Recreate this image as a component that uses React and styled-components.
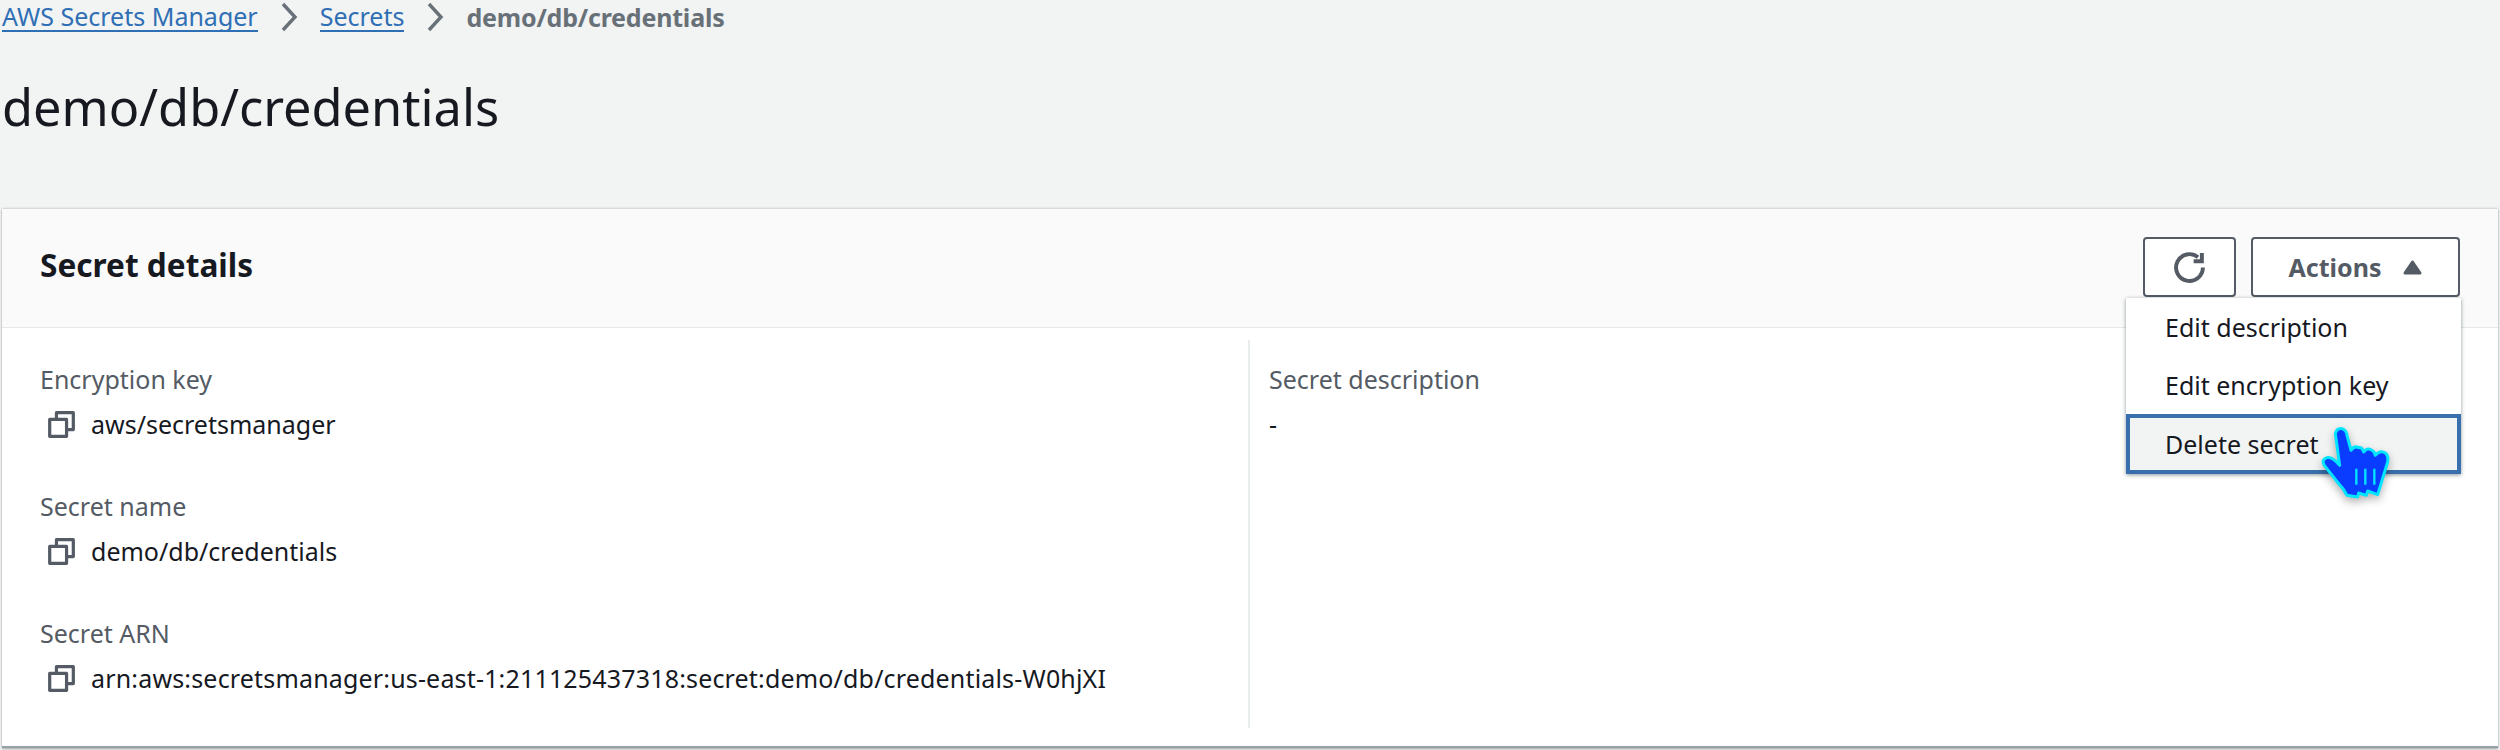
import styled, {createGlobalStyle} from 'styled-components'

const GlobalStyle = createGlobalStyle`
    html, body {
        margin: 0;
        padding: 0;
        height: 750px;
        overflow: hidden;
        background: #f2f3f3;
        font-family: "Noto Sans", Roboto, Arial, sans-serif;
    }
`

const Page = styled.div`
    width: 2500px;
    height: 750px;
    overflow: hidden;
    box-sizing: border-box;
    padding-top: 3px;
`

const Breadcrumbs = styled.nav`
    display: flex;
    align-items: center;
    height: 28px;
    padding-left: 2px;
    font-size: 25px;
    line-height: 28px;
`

const Crumb = styled.a`
    color: #2f6fb5;
    border-bottom: 2px solid #2f6fb5;
    height: 28px;
    line-height: 28px;
`

const CurrentCrumb = styled.span`
    color: #687078;
    font-weight: 700;
    letter-spacing: -.2px;
`

const Separator = styled.svg`
    width: 18px;
    height: 30px;
    margin: 0 22px;
    fill: none;
    stroke: #687078;
    stroke-width: 3.4;
`

const Title = styled.h1`
    margin: 46px 0 0 2px;
    height: 60px;
    font-size: 50.5px;
    line-height: 60px;
    font-weight: 400;
    color: #16191f;
`

const Card = styled.section`
    margin: 72px 2px 0;
    height: 539px;
    background: #fff;
    box-sizing: border-box;
    box-shadow: 0 1px 2px rgba(0, 22, 29, .35), 0 -1px 2px rgba(0, 22, 29, .12);
    border-bottom: 2px solid #9aa1a5;
`

const CardHeader = styled.header`
    display: flex;
    align-items: flex-start;
    justify-content: space-between;
    height: 119px;
    box-sizing: border-box;
    padding: 28px 38px 0;
    background: #fafafa;
    border-bottom: 1px solid #e6e8e8;
`

const CardTitle = styled.h2`
    margin: 0;
    font-size: 31.6px;
    line-height: 56px;
    font-weight: 700;
    color: #16191f;
`

const HeaderActions = styled.div`
    position: relative;
    display: flex;
    gap: 15px;
`

const OutlineButton = styled.button`
    display: flex;
    align-items: center;
    justify-content: center;
    gap: 22px;
    width: ${props => props.$width}px;
    height: 60px;
    padding: 0;
    background: #fff;
    border: 2px solid #545b64;
    border-radius: 4px;
    font-family: inherit;
    font-size: 25px;
    font-weight: 700;
    color: #545b64;
`

const Menu = styled.ul`
    position: absolute;
    top: 61px;
    right: -1px;
    width: 335px;
    margin: 0;
    padding: 0;
    list-style: none;
    background: #fff;
    box-shadow: 0 1px 4px rgba(0, 22, 29, .45);
`

const MenuItem = styled.li`
    display: flex;
    align-items: center;
    box-sizing: border-box;
    height: ${props => props.$active ? 60 : 58}px;
    padding-left: ${props => props.$active ? 35 : 39}px;
    font-size: 25px;
    color: #16191f;
    background: ${props => props.$active ? '#f2f3f3' : '#fff'};
    border: ${props => props.$active ? '4px solid #3a6fad' : 'none'};
`

const Cursor = styled.svg`
    position: absolute;
    top: 188px;
    left: 178px;
    width: 70px;
    height: 74px;
    overflow: visible;
    filter: drop-shadow(0 4px 4px rgba(0, 0, 0, .3));
`

const CardBody = styled.div`
    display: grid;
    grid-template-columns: 1246px 1fr;
    padding-top: 12px;
    height: 388px;
`

const Column = styled.div`
    display: flex;
    flex-direction: column;
    gap: 54px;
    padding: 25px 0 0 ${props => props.$divided ? 19 : 38}px;
    border-left: ${props => props.$divided ? '2px solid #eaeded' : 'none'};
`

const Field = styled.div`
    display: flex;
    flex-direction: column;
    gap: 17px;
`

const Label = styled.div`
    font-size: 25px;
    line-height: 28px;
    color: #545b64;
`

const Value = styled.div`
    display: flex;
    align-items: center;
    gap: 16px;
    height: 28px;
    padding-left: ${props => props.$copy ? 8 : 0}px;
    font-size: 25px;
    line-height: 28px;
    letter-spacing: ${props => props.$tracking || 0}px;
    color: #16191f;
`

const CopyIcon = styled.svg`
    flex: none;
    width: 27px;
    height: 27px;
    fill: none;
    stroke: #545b64;
    stroke-width: 1.9;
`

const Copy = () => (
    <CopyIcon viewBox="0 0 16 16">
        <path d="M1 5h10v10H1z" strokeLinejoin="round"/>
        <path d="M5 5V1h10v10h-4" strokeLinejoin="round"/>
    </CopyIcon>
)

const Chevron = () => (
    <Separator viewBox="0 0 18 30">
        <path d="M3 2l12 13L3 28"/>
    </Separator>
)

const App = () => {
    return (
        <Page>
            <GlobalStyle/>
            <Breadcrumbs>
                <Crumb>AWS Secrets Manager</Crumb>
                <Chevron/>
                <Crumb>Secrets</Crumb>
                <Chevron/>
                <CurrentCrumb>demo/db/credentials</CurrentCrumb>
            </Breadcrumbs>
            <Title>demo/db/credentials</Title>
            <Card>
                <CardHeader>
                    <CardTitle>Secret details</CardTitle>
                    <HeaderActions>
                        <OutlineButton $width={93}>
                            <svg width="33" height="33" viewBox="0 0 16 16" fill="none" stroke="#545b64" strokeWidth="1.9">
                                <path d="M14.5 8a6.5 6.5 0 1 1-2.4-5"/>
                                <path d="M14 1v4h-4"/>
                            </svg>
                        </OutlineButton>
                        <OutlineButton $width={209}>
                            Actions
                            <svg width="19" height="15" viewBox="0 0 19 15">
                                <path d="M9.5 2L17 13H2z" fill="#545b64" stroke="#545b64" strokeWidth="3" strokeLinejoin="round"/>
                            </svg>
                        </OutlineButton>
                        <Menu>
                            <MenuItem>Edit description</MenuItem>
                            <MenuItem>Edit encryption key</MenuItem>
                            <MenuItem $active>Delete secret</MenuItem>
                        </Menu>
                        <Cursor viewBox="122 75 210 220">
                            <path
                                d="M165 100Q170 82 185 85Q197 88 200 105L212 150Q222 135 235 142Q245 140 250 155Q262 140 275 150Q283 155 285 165Q300 148 315 158Q325 165 322 185L305 240L292 283L262 272L258 285L235 278L232 290L200 285Q190 265 175 250L132 195Q122 178 140 172Q155 168 178 195Z"
                                fill="#0a3cff"
                                stroke="#00e5ff"
                                strokeWidth="9"
                                strokeLinejoin="round"
                            />
                            <path d="M228 205v48M255 205v48M282 205v48" stroke="#00e5ff" strokeWidth="7" fill="none"/>
                        </Cursor>
                    </HeaderActions>
                </CardHeader>
                <CardBody>
                    <Column>
                        <Field>
                            <Label>Encryption key</Label>
                            <Value $copy><Copy/>aws/secretsmanager</Value>
                        </Field>
                        <Field>
                            <Label>Secret name</Label>
                            <Value $copy><Copy/>demo/db/credentials</Value>
                        </Field>
                        <Field>
                            <Label>Secret ARN</Label>
                            <Value $copy $tracking={0.17}><Copy/>arn:aws:secretsmanager:us-east-1:211125437318:secret:demo/db/credentials-W0hjXI</Value>
                        </Field>
                    </Column>
                    <Column $divided>
                        <Field>
                            <Label>Secret description</Label>
                            <Value>-</Value>
                        </Field>
                    </Column>
                </CardBody>
            </Card>
        </Page>
    )
}

export default App
